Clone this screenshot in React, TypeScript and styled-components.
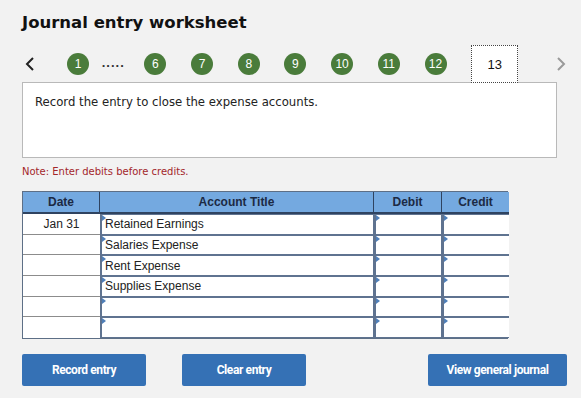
import React from 'react';
import styled, { createGlobalStyle } from 'styled-components';

const GlobalStyle = createGlobalStyle`
  html, body {
    margin: 0;
    padding: 0;
    background: #f2f2f2;
  }
`;

const Page = styled.div`
  width: 581px;
  height: 398px;
  box-sizing: border-box;
  padding: 12px 14px 0 22px;
  background: #f2f2f2;
  font-family: 'DejaVu Sans', Verdana, sans-serif;
`;

const Title = styled.h1`
  margin: 0;
  font-size: 16.5px;
  font-weight: bold;
  color: #111;
  line-height: 22px;
`;

const Nav = styled.div`
  display: flex;
  align-items: center;
  height: 38px;
  margin-top: 11px;
  margin-bottom: -1px;
  position: relative;
  z-index: 1;
`;

const Chevron = styled.span<{ $dim?: boolean }>`
  display: flex;
  align-items: center;
  width: 12px;
  color: ${p => (p.$dim ? '#9a9a9a' : '#222')};
`;

const Steps = styled.div`
  display: flex;
  align-items: center;
  gap: 24.7px;
  margin-left: 32px;
`;

const Step = styled.span`
  width: 22px;
  height: 22px;
  border-radius: 50%;
  background: #4a7c3b;
  color: #fff;
  font-family: 'Liberation Sans', Arial, sans-serif;
  font-size: 12px;
  display: flex;
  align-items: center;
  justify-content: center;
`;

const Dots = styled.span`
  width: 30px;
  margin: 0 -12px;
  font-family: 'Liberation Sans', Arial, sans-serif;
  font-weight: bold;
  font-size: 13px;
  color: #333;
  letter-spacing: 1px;
  padding-bottom: 3px;
`;

const Current = styled.span`
  width: 47px;
  height: 38px;
  box-sizing: border-box;
  border: 1px dotted #444;
  background: #fff;
  display: flex;
  align-items: center;
  justify-content: center;
  font-family: 'Liberation Sans', Arial, sans-serif;
  font-size: 13px;
  color: #111;
`;

const NextSlot = styled.span`
  margin-left: 38px;
`;

const Prompt = styled.div`
  width: 535px;
  height: 76px;
  box-sizing: border-box;
  border: 1px solid #b9b9b9;
  background: #fff;
  padding: 12px 12px;
  font-size: 11.7px;
  color: #222;
`;

const Note = styled.div`
  margin-top: 8px;
  font-size: 10px;
  color: #a3262a;
`;

const Grid = styled.div`
  margin-top: 14px;
  display: grid;
  grid-template-columns: 77px 274px 68px 67px;
  grid-template-rows: 22px repeat(6, 20.7px);
  width: 486px;
  box-sizing: border-box;
  border: 1px solid #5d6f86;
  background: #fff;
  font-family: 'Liberation Sans', Arial, sans-serif;
  font-size: 12px;
`;

const Head = styled.div<{ $last?: boolean }>`
  background: #74a9e0;
  color: #1c2a44;
  font-weight: bold;
  display: flex;
  align-items: center;
  justify-content: center;
  border-right: ${p => (p.$last ? 'none' : '1px solid #2f4360')};
  border-bottom: 2px solid #2f4360;
`;

const DateCell = styled.div<{ $last?: boolean }>`
  display: flex;
  align-items: center;
  justify-content: center;
  color: #222;
  border-bottom: ${p => (p.$last ? 'none' : '1px solid #8c8c8c')};
`;

const Input = styled.div<{ $edge?: boolean }>`
  position: relative;
  box-sizing: border-box;
  border: 1.5px solid #5f7390;
  border-left-width: 2px;
  border-right-width: ${p => (p.$edge ? '0' : '1.5px')};
  background: #fff;
  padding-left: 3px;
  display: flex;
  align-items: center;
  color: #222;
  white-space: nowrap;
`;

const Marker = styled.span`
  position: absolute;
  left: 0;
  top: 0;
  width: 0;
  height: 0;
  border-top: 3px solid transparent;
  border-bottom: 3px solid transparent;
  border-left: 4px solid #4f7fb8;
`;

const Actions = styled.div`
  display: flex;
  margin-top: 15px;
`;

const Button = styled.button<{ $wide?: boolean; $push?: boolean }>`
  height: 32px;
  width: ${p => (p.$wide ? '139px' : '124px')};
  margin-left: ${p => (p.$push ? 'auto' : '0')};
  margin-right: 36px;
  &:last-child {
    margin-right: 0;
  }
  border: none;
  border-radius: 2px;
  background: #3571b5;
  color: #fff;
  font-family: Roboto, 'Liberation Sans', sans-serif;
  font-weight: bold;
  font-size: 12px;
  letter-spacing: -0.4px;
  padding: 0;
`;

const Arrow = ({ dir }: { dir: 'left' | 'right' }) => (
  <svg width="10" height="16" viewBox="0 0 10 16">
    <path
      d={dir === 'left' ? 'M8 2 L2 8 L8 14' : 'M2 2 L8 8 L2 14'}
      fill="none"
      stroke="currentColor"
      strokeWidth="2"
    />
  </svg>
);

const rows = [
  { date: 'Jan 31', account: 'Retained Earnings' },
  { date: '', account: 'Salaries Expense' },
  { date: '', account: 'Rent Expense' },
  { date: '', account: 'Supplies Expense' },
  { date: '', account: '' },
  { date: '', account: '' },
];

export default function App() {
  return (
    <Page>
      <GlobalStyle />
      <Title>Journal entry worksheet</Title>
      <Nav>
        <Chevron style={{ marginLeft: 3 }}>
          <Arrow dir="left" />
        </Chevron>
        <Steps>
          <Step>1</Step>
          <Dots>.....</Dots>
          {['6', '7', '8', '9', '10', '11', '12'].map(n => (
            <Step key={n}>{n}</Step>
          ))}
          <Current>13</Current>
        </Steps>
        <NextSlot>
          <Chevron $dim>
            <Arrow dir="right" />
          </Chevron>
        </NextSlot>
      </Nav>
      <Prompt>Record the entry to close the expense accounts.</Prompt>
      <Note>Note: Enter debits before credits.</Note>
      <Grid>
        <Head>Date</Head>
        <Head>Account Title</Head>
        <Head>Debit</Head>
        <Head $last>Credit</Head>
        {rows.map((r, i) => (
          <React.Fragment key={i}>
            <DateCell $last={i === rows.length - 1}>{r.date}</DateCell>
            <Input>
              <Marker />
              {r.account}
            </Input>
            <Input>
              <Marker />
            </Input>
            <Input $edge>
              <Marker />
            </Input>
          </React.Fragment>
        ))}
      </Grid>
      <Actions>
        <Button>Record entry</Button>
        <Button>Clear entry</Button>
        <Button $wide $push>
          View general journal
        </Button>
      </Actions>
    </Page>
  );
}
